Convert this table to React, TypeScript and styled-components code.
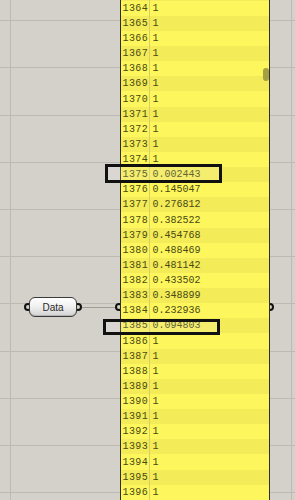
import React from "react";
import styled, { createGlobalStyle } from "styled-components";

const GlobalStyle = createGlobalStyle`
  html, body {
    margin: 0;
    padding: 0;
    width: 295px;
    height: 500px;
    overflow: hidden;
  }
`;

// canvas with its faint grid
const Canvas = styled.div`
  position: relative;
  width: 295px;
  height: 500px;
  overflow: hidden;
  background-color: #d4d1cb;
  background-image:
    linear-gradient(to right, transparent 10px, #bdbab3 10px, #bdbab3 11px, transparent 11px),
    linear-gradient(to right, transparent 291px, #bdbab3 291px, #bdbab3 292px, transparent 292px),
    repeating-linear-gradient(
      to bottom,
      transparent 0px,
      transparent 20.3px,
      #bdbab3 20.3px,
      #bdbab3 21.3px,
      transparent 21.3px,
      transparent 47.2px
    );
`;

// Data param node + wire, placed on the canvas as one group
const NodeGroup = styled.div`
  position: absolute;
  left: 24px;
  top: 297px;
  height: 20px;
  display: flex;
  align-items: center;
`;

const Port = styled.div<{ overlap?: "left" | "right" }>`
  width: 8px;
  height: 8px;
  flex: none;
  box-sizing: border-box;
  border: 2px solid #111;
  border-radius: 50%;
  background: #d4d1cb;
  margin-right: ${(p) => (p.overlap === "left" ? "-3px" : "0")};
  margin-left: ${(p) => (p.overlap === "right" ? "-3px" : "0")};
`;

const Capsule = styled.div`
  position: relative;
  width: 48px;
  height: 20px;
  box-sizing: border-box;
  border: 1px solid #3a3a3a;
  border-radius: 6px;
  background: linear-gradient(to bottom, #ffffff 0%, #f1f1f1 45%, #d2d2d2 100%);
  display: flex;
  align-items: center;
  justify-content: center;
  font-family: "Liberation Sans", Arial, sans-serif;
  font-size: 10px;
  color: #2a2a2a;
  box-shadow: inset 0 -1px 0 #b5b5b5;
`;

const Wire = styled.div`
  width: 34px;
  height: 1px;
  background: #9f9c96;
`;

const Panel = styled.div`
  position: absolute;
  left: 120px;
  top: 0;
  width: 150px;
  height: 500px;
  box-sizing: border-box;
  border-left: 1px solid #2e2e2e;
  border-right: 1px solid #2e2e2e;
  background: #fdf65c;
  overflow: hidden;
`;

const PanelPort = styled.div<{ side: "left" | "right" }>`
  position: absolute;
  top: 303px;
  ${(p) => (p.side === "left" ? "left: 115px;" : "left: 266px;")}
  width: 8px;
  height: 8px;
  box-sizing: border-box;
  border: 2px solid #111;
  border-radius: 50%;
  background: #d4d1cb;
`;

const List = styled.div`
  display: flex;
  flex-direction: column;
  margin-top: -14.4px;
`;

const Row = styled.div<{ dark: boolean }>`
  display: flex;
  height: 15.125px;
  align-items: center;
  background: ${(p) => (p.dark ? "#f3eb57" : "#fdf65c")};
  font-family: "Liberation Mono", "Courier New", monospace;
  font-size: 10px;
  color: #4a4a16;
`;

const Index = styled.div`
  width: 29px;
  height: 100%;
  box-sizing: border-box;
  padding-left: 1.5px;
  border-right: 1px solid #d6cf63;
  display: flex;
  align-items: center;
  letter-spacing: 0.4px;
`;

const Value = styled.div`
  padding-left: 2.5px;
`;

const Thumb = styled.div`
  position: absolute;
  left: 142px;
  top: 68px;
  width: 6px;
  height: 13px;
  border-radius: 3px;
  background: #a5a042;
`;

const Mark = styled.div<{ variant: "first" | "last" }>`
  position: absolute;
  left: ${(p) => (p.variant === "first" ? 105 : 103)}px;
  top: ${(p) => (p.variant === "first" ? 164 : 319)}px;
  width: 117px;
  height: ${(p) => (p.variant === "first" ? 19 : 16)}px;
  box-sizing: border-box;
  border: 3px solid #111;
  background: rgba(255, 255, 255, 0.14);
`;

const values: Record<number, string> = {
  1375: "0.002443",
  1376: "0.145047",
  1377: "0.276812",
  1378: "0.382522",
  1379: "0.454768",
  1380: "0.488469",
  1381: "0.481142",
  1382: "0.433502",
  1383: "0.348899",
  1384: "0.232936",
  1385: "0.094803",
};

const rows = Array.from({ length: 35 }, (_, i) => 1363 + i);

export default function App() {
  return (
    <>
      <GlobalStyle />
      <Canvas>
        <NodeGroup>
          <Port overlap="left" />
          <Capsule>Data</Capsule>
          <Port overlap="right" />
          <Wire />
        </NodeGroup>
        <PanelPort side="left" />
        <PanelPort side="right" />
        <Panel>
          <List>
            {rows.map((n) => (
              <Row key={n} dark={n % 2 === 1}>
                <Index>{n}</Index>
                <Value>{values[n] ?? "1"}</Value>
              </Row>
            ))}
          </List>
          <Thumb />
        </Panel>
        <Mark variant="first" />
        <Mark variant="last" />
      </Canvas>
    </>
  );
}
